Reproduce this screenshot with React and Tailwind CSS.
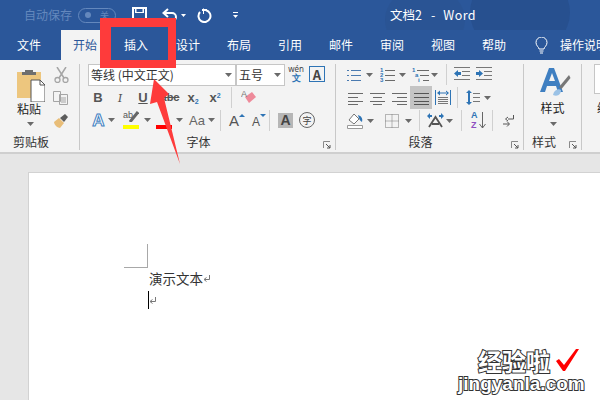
const F = '"Noto Sans CJK SC", "Liberation Sans", sans-serif';

function Caret({ w = 9, c = "#6a6a6a" }) {
  return (
    <span className="flex items-center justify-center shrink-0" style={{ width: w }}>
      <svg width="7" height="4"><path d="M0 0h7L3.5 4z" fill={c} /></svg>
    </span>
  );
}
function Sep({ h = "h-[21px]" }) {
  return <span className={`block w-px ${h} bg-[#d0d0d0] shrink-0`} />;
}
function Launcher() {
  return (
    <svg width="8" height="8" className="absolute right-[4px] bottom-[1px]" viewBox="0 0 8 8">
      <path d="M0.5 7V.5H7" fill="none" stroke="#8a8a8a" />
      <path d="M3 3l4 4M7 4v3H4" fill="none" stroke="#555" />
    </svg>
  );
}
function Lines({ rows, w = 15, color = "#6a6a6a", children }) {
  return (
    <svg width={w} height="16" viewBox={`0 0 ${w} 16`} className="block shrink-0">
      {rows.map(([x, x2, y], i) => (
        <path key={i} d={`M${x} ${y + 0.5}H${x2}`} stroke={color} />
      ))}
      {children}
    </svg>
  );
}
function Group({ w, label, children, labelClass = "" }) {
  return (
    <div className="relative h-[86px] shrink-0 border-r border-[#c8c8c8]" style={{ width: w }}>
      {children}
      <div className={`absolute bottom-0 left-0 right-0 text-center text-[12px] leading-[16px] text-[#333] ${labelClass}`}>{label}</div>
    </div>
  );
}
const Num = ({ x, y, t }) => (
  <text x={x} y={y} fontSize="6" fontWeight="700" fill="#2e74b5" fontFamily="Liberation Sans">{t}</text>
);
function Ret() {
  return (
    <svg className="block shrink-0" width="7" height="7" viewBox="0 0 7 7">
      <path d="M6.500 0v4.500H1.500M3.500 2.500L1 4.500l2.500 2" fill="none" stroke="#777" />
    </svg>
  );
}

export default function App() {
  const tabs = ["设计", "布局", "引用", "邮件", "审阅", "视图", "帮助"];
  return (
    <div className="relative w-[600px] h-[400px] overflow-hidden bg-[#e6e6e6]" style={{ fontFamily: F }}>
      {/* Title bar */}
      <div className="relative h-[30px] bg-[#2b579a] flex items-center overflow-hidden">
        <div className="absolute left-[470px] top-[-25px] w-[100px] h-[75px] rounded-full bg-[#27508f]" />
        <div className="absolute left-[385px] top-[-10px] w-[80px] h-[60px] rounded-full bg-[#2a5494]" />
        <span className="relative ml-[24px] text-[12px] text-[#6488bd] w-[48px] whitespace-nowrap shrink-0">自动保存</span>
        <span className="relative ml-[6px] w-[38px] h-[15px] rounded-full border border-[#6488bd] flex items-center justify-between px-[6px] shrink-0">
          <span className="w-[6px] h-[6px] rounded-full bg-[#6488bd]" />
          <span className="text-[9px] leading-none text-[#6488bd]">关</span>
        </span>
        <svg className="relative ml-[16px] shrink-0" width="15" height="16" viewBox="0 0 15 16">
          <path d="M1 1h13v14H1z" fill="none" stroke="#fff" strokeWidth="2" />
          <path d="M3 1h9v5H3zM4 11h7v4H4z" fill="#fff" />
          <path d="M4.5 2h6v3h-6z" fill="#2b579a" />
        </svg>
        <svg className="relative ml-[15px] shrink-0" width="16" height="15" viewBox="0 0 16 15">
          <path d="M2 5h8a4 4 0 0 1 0 8H6" fill="none" stroke="#fff" strokeWidth="2" />
          <path d="M6 1L1.5 5 6 9" fill="none" stroke="#fff" strokeWidth="2" />
        </svg>
        <svg className="relative ml-[3px] shrink-0" width="5" height="3"><path d="M0 0h5L2.5 3z" fill="#fff" /></svg>
        <svg className="relative ml-[11px] shrink-0" width="15" height="15" viewBox="0 0 15 15">
          <path d="M9 2.200A6 6 0 1 1 3 4" fill="none" stroke="#fff" strokeWidth="2" />
          <path d="M6 0v6h1V1z" fill="#fff" />
          <path d="M5 1h5v2H5z" fill="#fff" />
        </svg>
        <svg className="relative ml-[21px] shrink-0" width="5" height="6" viewBox="0 0 5 6"><path d="M0 .5h5" stroke="#fff" /><path d="M0 3h5L2.5 6z" fill="#fff" /></svg>
        <span className="relative ml-[152px] text-[12.5px] text-white whitespace-nowrap flex shrink-0">
          <span>文档2</span><span className="ml-[9px]">-</span><span className="ml-[8px] tracking-[0.4px]">Word</span>
        </span>
      </div>

      {/* Tabs */}
      <div className="h-[30px] bg-[#2b579a] flex text-[12px] text-white">
        <div className="w-[61px] shrink-0 pl-[17px] leading-[30px]">文件</div>
        <div className="w-[49px] shrink-0 h-[30px] bg-[#f3f3f3] text-[#2b579a] pl-[12px] leading-[30px]">开始</div>
        <div className="w-[51px] shrink-0 pl-[14px] leading-[30px]">插入</div>
        <div className="flex ml-[15px] shrink-0">
          {tabs.map((t) => (
            <div key={t} className="w-[51px] shrink-0 leading-[30px]">{t}</div>
          ))}
        </div>
        <svg className="ml-[2px] mt-[7px] shrink-0" width="13" height="17" viewBox="0 0 13 17">
          <path d="M4 12c0-2-3-3-3-6.500a5.500 5.500 0 0 1 11 0C12 9 9 10 9 12z" fill="none" stroke="#fff" />
          <path d="M4.500 14h4M5 16h3" stroke="#fff" />
        </svg>
        <div className="ml-[12px] shrink-0 whitespace-nowrap leading-[30px]">操作说明搜索</div>
      </div>

      {/* Ribbon */}
      <div className="h-[94px] bg-[#f3f3f3] border-b-2 border-[#cfcfcf] flex pt-[4px] overflow-hidden text-[#333]">
        {/* Clipboard */}
        <Group w={80} label="剪贴板" labelClass="!text-left pl-[13px]">
          <svg className="absolute left-[17px] top-[5px]" width="28" height="33" viewBox="0 0 28 33">
            <path d="M0 3h24v26H0z" fill="#edc67e" />
            <path d="M8 1h8v2h3v3H5V3h3z" fill="#6e6e6e" />
            <path d="M14 11h9l5 5v17H14z" fill="#fff" stroke="#555" />
            <path d="M23 11v5h5" fill="none" stroke="#555" />
          </svg>
          <div className="absolute left-[17px] top-[37px] text-[12px] leading-[16px] text-[#222]">粘贴</div>
          <svg className="absolute left-[27px] top-[58px]" width="7" height="4"><path d="M0 0h7L3.500 4z" fill="#6a6a6a" /></svg>
          <svg className="absolute left-[54px] top-[3px]" width="15" height="16" viewBox="0 0 15 16">
            <path d="M3 0l7 11M12 0L5 11" stroke="#a5a5a5" strokeWidth="1.500" />
            <circle cx="3.500" cy="13" r="2.500" fill="none" stroke="#a5a5a5" strokeWidth="1.300" />
            <circle cx="11.500" cy="13" r="2.500" fill="none" stroke="#a5a5a5" strokeWidth="1.300" />
          </svg>
          <svg className="absolute left-[53px] top-[27px]" width="15" height="14" viewBox="0 0 15 14">
            <path d="M.500.500h7v10h-7zM6.500 3.500h8v10h-8z" fill="#f3f3f3" stroke="#a5a5a5" />
            <path d="M8 7h5M8 9h5M8 11h5" stroke="#a5a5a5" />
          </svg>
          <svg className="absolute left-[53px] top-[49px]" width="16" height="16" viewBox="0 0 16 16">
            <path d="M1 9l5-4 5 5-4 5C5 15 1 12 1 9z" fill="#e8bd78" />
            <path d="M7 5l5-4 3 3-4 5z" fill="#5c5c5c" />
          </svg>
        </Group>

        {/* Font */}
        <Group w={256} label="字体" labelClass="pr-[18px]">
          <div className="absolute left-[8px] top-0 flex h-[22px] w-[197px] bg-white border border-[#c6c6c6]">
            <div className="w-[148px] flex items-center border-r-2 border-[#c6c6c6]">
              <span className="ml-[2px] text-[12px] text-[#333] whitespace-nowrap flex-1">等线 (中文正文)</span>
              <Caret w={14} />
            </div>
            <div className="flex-1 flex items-center">
              <span className="ml-[2px] text-[12px] text-[#333] flex-1">五号</span>
              <Caret w={14} />
            </div>
          </div>
          <div className="absolute left-[208px] top-[1px] w-[16px] text-center text-[8px] leading-[8px] text-[#444] font-sans">
            wén<div className="text-[#2e74b5] text-[9px] leading-[10px] font-bold">文</div>
          </div>
          <div className="absolute left-[229px] top-[2px] w-[16px] h-[16px] border border-[#2e74b5] flex items-center justify-center text-[13px] font-bold leading-none text-[#444]">A</div>

          {/* row 2 */}
          <div className="absolute left-0 top-[23px] h-[21px] w-[200px] flex items-center text-[#555]" style={{ fontFamily: '"Liberation Sans", sans-serif' }}>
            <span className="ml-[9px] w-[18px] text-center text-[13px] font-bold">B</span>
            <span className="ml-[4px] w-[18px] text-center text-[13px] italic font-serif">I</span>
            <span className="ml-[5px] w-[18px] text-center text-[13px] font-bold underline">U</span>
            <span className="ml-[6px] w-[24px] text-center text-[11px] line-through font-bold">abc</span>
            <span className="ml-[1px] w-[20px] text-center text-[13px] font-bold">x<sub className="text-[7px] text-[#2e74b5]">2</sub></span>
            <span className="ml-[2px] w-[20px] text-center text-[13px] font-bold">x<sup className="text-[7px] text-[#2e74b5]">2</sup></span>
            <span className="ml-[6px]"><Sep /></span>
            <svg className="ml-[9px] shrink-0" width="16" height="17" viewBox="0 0 16 17">
              <path d="M4 8l7-5 4 5-7 6z" fill="#ee8a9a" />
              <text x="0" y="8" fontSize="9" fill="#777" fontFamily="Liberation Sans">A</text>
            </svg>
          </div>

          {/* row 3 */}
          <div className="absolute left-0 top-[46px] h-[20px] w-[256px] flex items-center text-[#555]" style={{ fontFamily: '"Liberation Sans", sans-serif' }}>
            <span className="ml-[12px] w-[13px] text-center text-[17px] font-bold leading-none text-white [-webkit-text-stroke:1px_#3f7fc1]">A</span>
            <span className="ml-[2px]"><Caret w={9} /></span>
            <span className="relative ml-[7px] w-[16px] h-[18px]">
              <span className="absolute left-0 top-[-1px] text-[9px] leading-[10px]">ab</span>
              <svg className="absolute right-0 top-0" width="10" height="11" viewBox="0 0 10 11"><path d="M1 11L9 1" stroke="#666" strokeWidth="3" /></svg>
              <span className="absolute left-0 right-0 bottom-0 h-[4px] bg-[#ffff00]" />
            </span>
            <span className="ml-[4px]"><Caret w={8} /></span>
            <span className="relative ml-[5px] w-[16px] h-[18px]"><span className="absolute left-0 right-0 bottom-0 h-[4px] bg-[#ff0000]" /></span>
            <span className="ml-[3px]"><Caret w={8} /></span>
            <span className="ml-[6px] w-[16px] text-[13px] leading-none whitespace-nowrap text-[#666]">Aa</span>
            <span className="ml-[1px]"><Caret w={10} /></span>
            <span className="ml-[4px]"><Sep /></span>
            <span className="ml-[8px] w-[16px] flex items-start text-[15px] leading-none text-[#555]">A<svg className="mt-[1px]" width="6" height="3"><path d="M0 3h6L3 0z" fill="#2e74b5" /></svg></span>
            <span className="ml-[7px] w-[15px] flex items-start text-[12px] leading-none text-[#555] pt-[3px]">A<svg className="-mt-[2px]" width="6" height="3"><path d="M0 0h6L3 3z" fill="#2e74b5" /></svg></span>
            <span className="ml-[2px]"><Sep /></span>
            <span className="ml-[8px] w-[15px] h-[15px] bg-[#b6b6b6] flex items-center justify-center text-[14px] font-bold leading-none text-[#444]">A</span>
            <span className="ml-[6px] w-[16px] h-[16px] rounded-full border border-[#666] flex items-center justify-center text-[9px] leading-none text-[#444]" style={{ fontFamily: F }}>字</span>
          </div>
          <Launcher />
        </Group>

        {/* Paragraph */}
        <Group w={188} label="段落" labelClass="pr-[18px]">
          <div className="absolute left-[11px] top-0 h-[21px] flex items-center">
            <Lines w={15} rows={[[0, 2, 3], [4, 14, 3], [0, 2, 8], [4, 14, 8], [0, 2, 13], [4, 14, 13]]} color="#4a7ab0" />
            <span className="ml-[3px]"><Caret w={9} /></span>
            <span className="ml-[6px]">
              <Lines w={15} rows={[[5, 15, 3], [5, 15, 8], [5, 15, 13]]}>
                <Num x={0} y={5} t="1" /><Num x={0} y={10} t="2" /><Num x={0} y={15} t="3" />
              </Lines>
            </span>
            <span className="ml-[3px]"><Caret w={9} /></span>
            <span className="ml-[5px]">
              <Lines w={17} rows={[[5, 17, 3], [8, 17, 8], [11, 17, 13]]}>
                <Num x={0} y={5} t="1" /><Num x={3} y={10} t="a" /><Num x={6} y={15} t="i" />
              </Lines>
            </span>
            <span className="ml-[1px]"><Caret w={9} /></span>
            <span className="ml-[7px]"><Sep /></span>
            <svg className="ml-[7px] shrink-0" width="17" height="15" viewBox="0 0 17 15">
              <path d="M0 .500h16M8 4.500h8M8 8.500h8M0 12.500h16" stroke="#777" />
              <path d="M0 6.500L4 3v2h3v3H4v2z" fill="#2e74b5" />
            </svg>
            <svg className="ml-[5px] shrink-0" width="17" height="15" viewBox="0 0 17 15">
              <path d="M0 .500h16M8 4.500h8M8 8.500h8M0 12.500h16" stroke="#777" />
              <path d="M7 6.500L3 3v2H0v3h3v2z" fill="#2e74b5" />
            </svg>
          </div>
          <div className="absolute left-[12px] top-[22px] h-[23px] flex items-center">
            <Lines w={15} rows={[[0, 15, 3], [0, 10, 7], [0, 15, 11], [0, 10, 14]]} />
            <span className="ml-[7px]"><Lines w={15} rows={[[0, 15, 3], [3, 12, 7], [0, 15, 11], [3, 12, 14]]} /></span>
            <span className="ml-[7px]"><Lines w={15} rows={[[0, 15, 3], [5, 15, 7], [0, 15, 11], [5, 15, 14]]} /></span>
            <span className="ml-[3px] w-[22px] h-[23px] bg-[#c4c4c4] flex items-center justify-center"><Lines w={15} rows={[[0, 15, 3], [0, 15, 7], [0, 15, 11], [0, 15, 14]]} color="#555" /></span>
            <svg className="ml-[3px] shrink-0" width="16" height="17" viewBox="0 0 16 17">
              <path d="M.500 1v15M15.500 1v15" stroke="#2e74b5" />
              <path d="M3 8.500h10M3 10.500h10M3 12.500h10M3 14.500h10" stroke="#777" />
              <path d="M2 4l3-2.500v5zM14 4l-3-2.500v5zM4 3.500h8v1H4z" fill="#2e74b5" />
            </svg>
            <span className="ml-[6px]"><Sep /></span>
            <svg className="ml-[8px] shrink-0" width="14" height="17" viewBox="0 0 14 17">
              <path d="M3 1L0 4h2v9H0l3 3 3-3H4V4h2z" fill="#2e74b5" />
              <path d="M7 4.500h7M7 8.500h7M7 12.500h7" stroke="#777" />
            </svg>
            <span className="ml-[3px]"><Caret w={9} /></span>
          </div>
          <div className="absolute left-[11px] top-[46px] h-[21px] flex items-center">
            <svg className="shrink-0" width="17" height="17" viewBox="0 0 17 17">
              <path d="M2 8l5-6 5 5-5 5z" fill="#fff" stroke="#777" />
              <path d="M11 3c3 1 5 3 4 7-2-1-3-3-4-7z" fill="#2e74b5" />
              <path d="M.500 13.500h15v3H.500z" fill="#fff" stroke="#999" />
            </svg>
            <span className="ml-[2px]"><Caret w={9} /></span>
            <svg className="ml-[10px] shrink-0" width="14" height="14" viewBox="0 0 14 14">
              <path d="M.500.500h13v13H.500zM7 .500v13M.500 7h13" fill="none" stroke="#777" strokeDasharray="1 1" />
            </svg>
            <span className="ml-[5px]"><Caret w={9} /></span>
            <span className="ml-[6px]"><Sep /></span>
            <svg className="ml-[7px] shrink-0" width="17" height="15" viewBox="0 0 17 15">
              <path d="M0 3l3-3v2h2v2H3v2zM17 3l-3-3v2h-2v2h2v2z" fill="#2e74b5" />
              <path d="M2 14L8.500 4 15 14M5 11h7" fill="none" stroke="#555" strokeWidth="1.800" />
            </svg>
            <span className="ml-[1px]"><Caret w={9} /></span>
            <span className="ml-[7px]"><Sep /></span>
            <span className="relative ml-[9px] w-[15px] h-[19px]" style={{ fontFamily: '"Liberation Sans", sans-serif' }}>
              <span className="absolute left-0 top-[-1px] text-[9px] leading-[10px] font-bold text-[#2e74b5]">A</span>
              <span className="absolute left-0 top-[9px] text-[9px] leading-[10px] font-bold text-[#8e4fc0]">Z</span>
              <svg className="absolute right-0 top-0" width="7" height="19" viewBox="0 0 7 19"><path d="M3.500 1v16M.500 13l3 4 3-4" fill="none" stroke="#666" /></svg>
            </span>
            <span className="ml-[6px]"><Sep /></span>
            <svg className="ml-[10px] shrink-0" width="11" height="12" viewBox="0 0 11 12">
              <path d="M10.500 0v4H5M5 2L2.500 4 5 6" fill="none" stroke="#555" />
              <path d="M0 9h6M4 6.500L6.500 9 4 11.500" fill="none" stroke="#555" />
            </svg>
          </div>
          <Launcher />
        </Group>

        {/* Styles */}
        <Group w={58} label="样式" labelClass="!text-left pl-[8px]">
          <svg className="absolute left-[16px] top-[4px]" width="31" height="30" viewBox="0 0 31 30">
            <path d="M9 0h5l9 24h-5l-2-6H7l-2 6H0zM9 13h6l-3-8z" fill="#3f7fc1" fillRule="evenodd" />
            <path d="M19 19L29 7l1.500 3-9 11z" fill="#777" />
            <path d="M13 27c1-5 5-7 8-5 0 4-3 7-8 5z" fill="#9bc2e6" />
          </svg>
          <div className="absolute left-0 right-0 top-[36px] text-center text-[12px] leading-[16px] text-[#222]">样式</div>
          <svg className="absolute left-[26px] top-[58px]" width="7" height="4"><path d="M0 0h7L3.500 4z" fill="#6a6a6a" /></svg>
          <Launcher />
        </Group>

        {/* Editing stub */}
        <div className="relative flex-1">
          <div className="absolute left-[12px] top-0 w-[20px] h-[30px] bg-white border border-[#c6c6c6]" />
          <div className="absolute left-[15px] top-[36px] text-[12px] leading-[16px] text-[#222]">编</div>
        </div>
      </div>

      {/* Document area */}
      <div className="h-[246px] pt-[18px] pl-[28px]">
        <div className="relative w-[572px] h-[228px] bg-white border-t border-l border-[#d2d2d2]">
          <div className="absolute left-[95px] top-[71px] w-[24px] h-[24px] border-r border-b border-[#a8a8a8]" />
          <div className="absolute left-[120px] top-[95px] text-[13.500px] leading-[20px] text-[#333] whitespace-nowrap flex items-center">
            演示文本<Ret />
          </div>
          <div className="absolute left-[119px] top-[118px] flex items-center h-[18px]">
            <span className="w-px h-[18px] bg-black" />
            <Ret />
          </div>
        </div>
      </div>

      {/* Red annotation box and arrow */}
      <div className="absolute left-[100px] top-[18px] w-[76px] h-[50px] border-[#fe3b3b] border-t-[9px] border-b-[8px] border-l-[11px] border-r-[8px]" />
      <svg className="absolute left-[145px] top-[76px]" width="40" height="92" viewBox="0 0 40 92">
        <path d="M9 3L24 18 19 22 35 88 12 26 5 28z" fill="#fe3b3b" />
      </svg>

      {/* Watermark */}
      <div className="absolute left-[458px] top-[347px] w-[130px] font-bold text-white [-webkit-text-stroke:2px_#333] [paint-order:stroke_fill]">
        <div className="h-[27px] pl-[20px] text-[24px] leading-[27px] whitespace-nowrap">经验啦</div>
        <div className="text-[19px] leading-[20px] whitespace-nowrap" style={{ fontFamily: '"Liberation Sans", sans-serif' }}>jingyanla.com</div>
      </div>
      <svg className="absolute left-[555px] top-[348px]" width="25" height="24" viewBox="0 0 25 24">
        <path d="M1 13l3-2 5 6L21 1h3L10 23h-2z" fill="#f00" />
      </svg>
    </div>
  );
}
